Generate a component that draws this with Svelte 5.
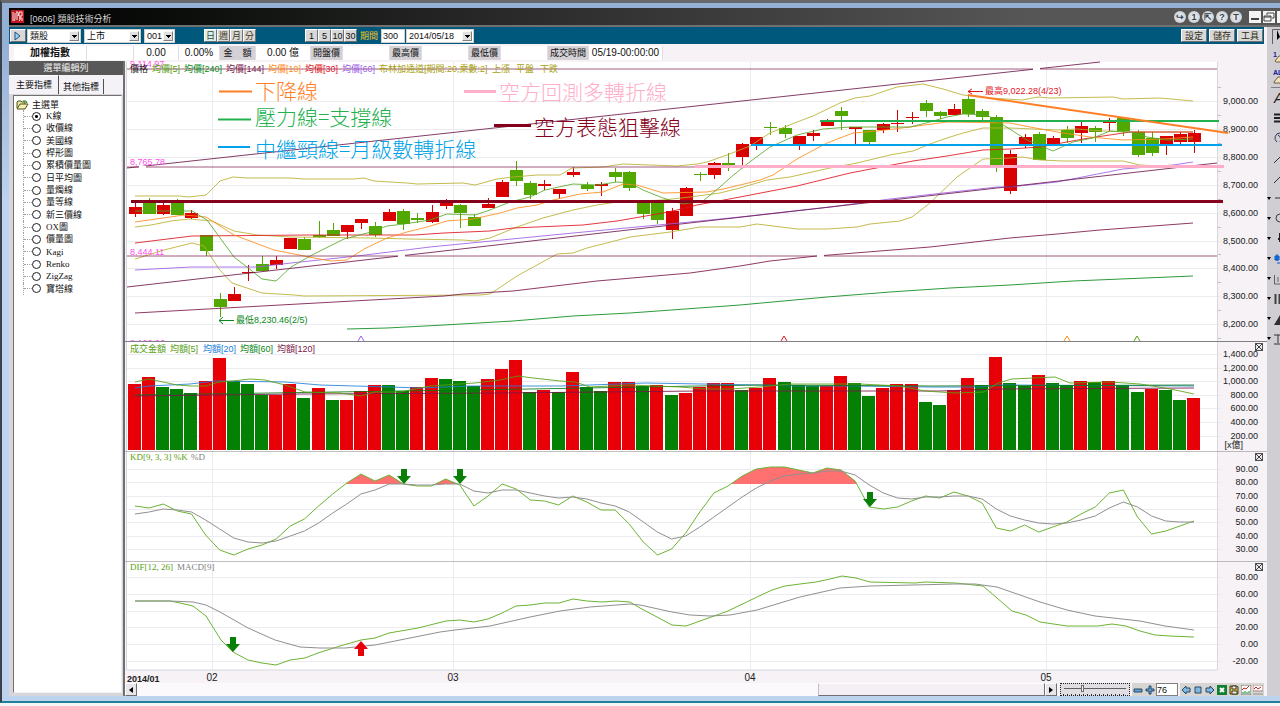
<script lang="ts">
  // all chart data below is in chart canvas units; the canvas starts at x=125
  const STEP = 14.12
  const X0 = 135
  const px = (i: number) => X0 + i * STEP

  // [color, body top, body bottom, high, low]
  const candles: [string, number, number, number, number][] = [
    ["r", 207, 214, 201, 217], ["g", 202, 214, 198, 214], ["r", 205, 214, 203, 215], ["g", 202, 215, 199, 215],
    ["r", 213, 218, 210, 219], ["g", 235, 251, 235, 256], ["g", 299, 307, 293, 317], ["r", 294, 301, 287, 301],
    ["r", 272, 273, 265, 281], ["g", 264, 271, 256, 271], ["r", 260, 265, 256, 269], ["r", 238, 249, 238, 249],
    ["g", 239, 250, 237, 250], ["g", 235, 237, 221, 238], ["g", 230, 236, 223, 236], ["r", 225, 232, 225, 239],
    ["r", 219, 223, 219, 229], ["g", 226, 235, 222, 237], ["r", 212, 221, 209, 221], ["g", 211, 224, 209, 230],
    ["g", 218, 220, 213, 223], ["r", 212, 222, 205, 223], ["r", 202, 206, 199, 209], ["g", 205, 213, 204, 228],
    ["g", 217, 226, 214, 226], ["r", 204, 208, 198, 208], ["r", 182, 197, 180, 197], ["g", 170, 181, 161, 186],
    ["g", 183, 195, 181, 199], ["r", 184, 186, 180, 190], ["r", 189, 194, 189, 199], ["r", 172, 175, 167, 177],
    ["g", 185, 189, 182, 191], ["r", 184, 186, 182, 196], ["g", 172, 177, 168, 182], ["g", 172, 188, 171, 191],
    ["g", 202, 214, 202, 219], ["g", 202, 220, 202, 224], ["r", 211, 230, 208, 239], ["r", 188, 216, 187, 216],
    ["g", 174, 175, 172, 181], ["r", 163, 175, 162, 179], ["g", 163, 166, 153, 171], ["r", 144, 157, 143, 166],
    ["r", 137, 144, 137, 150], ["g", 127, 128, 122, 135], ["g", 128, 134, 125, 138], ["r", 136, 144, 136, 150],
    ["r", 133, 136, 130, 141], ["r", 120, 126, 119, 126], ["g", 111, 116, 107, 130], ["r", 127, 129, 127, 144],
    ["g", 130, 142, 130, 144], ["r", 124, 130, 123, 133], ["r", 123, 124, 110, 132], ["r", 117, 118, 112, 124],
    ["g", 103, 111, 100, 117], ["g", 112, 116, 111, 119], ["r", 109, 115, 104, 115], ["g", 99, 114, 94, 117],
    ["g", 111, 117, 109, 122], ["g", 117, 166, 115, 172], ["r", 154, 191, 150, 194], ["r", 137, 144, 134, 148],
    ["g", 134, 160, 132, 160], ["r", 138, 144, 136, 146], ["g", 130, 138, 126, 143], ["r", 126, 133, 122, 143],
    ["g", 128, 132, 126, 142], ["r", 122, 123, 118, 131], ["g", 118, 131, 117, 136], ["g", 132, 155, 130, 157],
    ["g", 138, 153, 132, 156], ["r", 136, 144, 136, 155], ["r", 134, 142, 132, 146], ["r", 133, 142, 130, 153],
  ]

  const priceLines = [
    { color: "#b8b030", d: "135,196 179,196 189,197 206,195 220,181 233,177 247,178 291,178 304,179 354,179 364,178 374,181 407,183 417,184 463,183 475,185 497,179 513,177 537,175 560,175 572,168 603,167 623,164 650,165 677,166 697,164 707,162 727,155 750,146 770,133 797,122 813,116 840,103 855,98 870,96 897,87 923,84 943,89 963,95 990,98 1022,100 1038,97 1050,98 1113,97 1123,99 1160,98 1193,101" },
    { color: "#b8b030", d: "135,227 151,225 171,221 189,219 212,221 234,231 257,235 291,237 370,238 410,239 463,240 475,241 490,238 517,227 543,218 573,210 597,205 617,202 663,200 690,197 720,193 740,188 767,180 790,177 830,168 857,163 890,155 913,151 930,144 947,138 963,133 983,128 1010,128 1057,130 1077,129 1103,131 1127,132 1193,132" },
    { color: "#b8b030", d: "135,259 164,250 192,243 204,246 219,269 232,283 262,293 294,295 304,296 480,295 490,294 517,276 557,254 573,253 587,248 630,237 670,232 700,227 740,227 757,224 797,229 827,229 857,227 870,224 900,221 912,217 930,203 957,177 983,159 1010,158 1022,157 1040,160 1063,161 1123,161 1140,165 1158,166" },
    { color: "#9b5fe8", d: "135,270 191,267 257,267 291,263 357,256 430,247 573,233 690,222 740,217 830,207 890,199 997,187 1010,187 1057,182 1123,169 1173,165 1193,162" },
    { color: "#e0141e", d: "135,243 192,236 311,235 357,235 414,235 444,233 490,231 513,228 583,225 617,221 663,213 677,210 697,205 740,197 797,186 850,173 913,161 947,156 983,150 1010,149 1040,147 1083,139 1130,132 1193,132" },
    { color: "#ff8c1a", d: "135,222 184,215 206,217 234,235 274,250 314,258 331,261 347,260 364,249 387,238 407,232 427,227 447,221 473,219 500,213 517,208 537,205 553,200 580,194 603,192 623,184 637,185 663,193 707,192 723,189 740,185 760,180 773,175 797,159 827,143 853,133 877,131 910,127 947,122 1010,123 1030,127 1057,132 1090,137 1123,140 1163,139 1193,137" },
    { color: "#58a828", d: "135,211 178,211 192,211 207,220 234,257 247,267 262,279 276,281 291,267 312,255 344,239 371,232 387,226 404,224 417,222 430,220 447,214 475,215 490,210 510,202 530,197 545,190 573,184 597,185 617,182 630,183 643,190 663,198 683,204 703,201 720,187 730,178 747,164 770,147 797,135 823,129 850,127 910,127 930,122 947,117 963,114 987,115 1005,126 1027,140 1053,151 1073,142 1093,138 1110,131 1130,132 1147,137 1167,140 1193,139" },
    { color: "#7a1848", d: "135,313 444,296 463,294 513,291 597,281 690,273 740,266 770,261 817,256 930,247 1010,238 1057,234 1100,230 1193,223" },
    { color: "#088818", d: "347,329 387,328 444,325 513,321 573,316 630,313 740,305 827,297 890,292 950,288 1010,285 1073,281 1193,276" },
    { color: "#6e1a4c", d: "127,168 1100,62" },
    { color: "#6e1a4c", d: "127,287 1217,163" },
  ]

  const volumeTops = [
    384, 377, 387, 389, 393, 381, 358, 381, 384, 395, 395, 384, 398, 388, 400, 400, 391, 385, 385,
    391, 387, 378, 379, 381, 386, 379, 369, 360, 392, 390, 392, 372, 387, 391, 382, 382, 386, 385,
    395, 393, 387, 383, 383, 390, 388, 378, 382, 385, 386, 386, 376, 383, 396, 388, 384, 384, 402,
    405, 390, 378, 385, 357, 383, 386, 375, 383, 385, 381, 382, 381, 385, 392, 389, 390, 400, 398,
  ]
  const volumeColors = "rrgggrrgggrrgrgrrrggrrgggrrrgrgrggrrgrgrrrrgrrgggrrggrrrggrrgrggrggrgrggrggr"

  const volumeLines = [
    { color: "#2080d8", d: "135,388 149,386 190,384 215,381 285,382 320,385 390,387 420,388 470,386 560,386 590,385 645,383 760,385 800,386 860,386 930,387 980,387 1000,385 1194,386" },
    { color: "#087818", d: "135,395 270,393 400,391 530,389 640,387 760,385 930,386 1194,385" },
    { color: "#7a1848", d: "135,396 300,394 500,393 700,391 940,391 1000,389 1194,388" },
    { color: "#58a010", d: "135,382 149,379 163,382 177,385 191,386 206,386 219,382 233,381 250,379 265,380 285,385 305,392 340,393 361,396 375,392 400,392 430,386 475,383 500,380 518,376 533,378 560,381 575,382 590,387 630,385 680,387 705,389 730,389 760,387 790,384 860,384 900,386 925,391 955,393 984,392 998,383 1012,379 1055,377 1070,383 1110,382 1140,384 1165,388 1180,391 1194,394" },
  ]

  const kLine = [
    506, 508, 504, 511, 514, 535, 550, 555, 549, 545, 539, 526, 519, 506, 494, 483, 474, 481, 475,
    484, 486, 486, 479, 485, 506, 496, 484, 489, 500, 501, 505, 496, 502, 510, 510, 524, 542, 555,
    549, 533, 512, 493, 486, 476, 469, 467, 467, 470, 473, 468, 470, 481, 507, 509, 507, 501, 496,
    498, 492, 496, 503, 528, 531, 525, 532, 527, 522, 514, 507, 493, 490, 517, 534, 531, 526, 521,
  ]
  const dLine = [
    514, 512, 509, 510, 512, 520, 529, 538, 542, 543, 541, 536, 531, 523, 513, 504, 494, 490, 484,
    484, 485, 485, 484, 484, 491, 493, 490, 490, 493, 496, 498, 497, 499, 503, 506, 512, 522, 532,
    539, 536, 527, 517, 507, 497, 488, 481, 476, 474, 473, 471, 471, 475, 485, 493, 498, 499, 497,
    497, 496, 496, 499, 509, 516, 520, 523, 524, 523, 520, 516, 508, 502, 507, 516, 521, 522, 522,
  ]
  const toPoints = (ys: number[]) => ys.map((y, i) => `${px(i).toFixed(1)},${y}`).join(" ")

  const dif = "135,601 170,601 180,603 193,606 206,616 221,640 233,652 248,660 262,663 276,665 290,660 305,658 318,653 340,646 361,640 375,638 389,633 418,628 446,621 460,620 474,622 488,619 502,613 516,606 530,605 545,603 559,603 573,599 587,601 602,602 616,601 630,602 640,608 672,625 686,626 700,621 728,611 757,597 772,590 785,586 800,584 816,582 830,579 842,576 856,578 870,582 915,583 925,582 955,583 965,584 983,586 997,598 1012,611 1026,615 1040,622 1067,626 1098,626 1112,624 1126,626 1140,631 1155,635 1170,636 1194,637"
  const macd = "135,601 170,601 193,602 206,605 220,612 248,628 275,640 300,647 320,648 345,648 375,645 400,640 440,632 455,630 490,626 530,617 560,611 590,607 630,604 640,605 672,612 690,615 710,616 730,615 757,610 800,597 840,588 870,586 955,584 975,584 997,587 1040,602 1067,610 1095,616 1140,621 1165,626 1194,630"

  const months = [212, 453, 750, 1046]
  const priceTicks = ["9,000.00", "8,900.00", "8,800.00", "8,700.00", "8,600.00", "8,500.00", "8,400.00", "8,300.00", "8,200.00"]
  const volumeTicks = ["1,400.00", "1,200.00", "1,000.00", "800.00", "600.00", "400.00", "200.00"]
  const kdTicks = ["90.00", "80.00", "70.00", "60.00", "50.00", "40.00", "30.00"]
  const macdTicks = ["80.00", "60.00", "40.00", "20.00", "0.00", "-20.00"]

  const priceLegend = [
    { x: 130, text: "價格", color: "#111111" },
    { x: 152, text: "均價[5]", color: "#58a010" },
    { x: 184, text: "均價[240]", color: "#088818" },
    { x: 226, text: "均價[144]", color: "#7a1848" },
    { x: 268, text: "均價[10]", color: "#ff8c1a" },
    { x: 305, text: "均價[30]", color: "#e0141e" },
    { x: 342, text: "均價[60]", color: "#9b5fe8" },
    { x: 379, text: "布林加通道[期間:20,乘數:2]", color: "#a8a010" },
    { x: 492, text: "上漲", color: "#a8a010" },
    { x: 516, text: "平盤", color: "#a8a010" },
    { x: 540, text: "下跌", color: "#a8a010" },
  ]
  const volumeLegend = [
    { x: 130, text: "成交金額", color: "#58a010" },
    { x: 170, text: "均額[5]", color: "#58a010" },
    { x: 203, text: "均額[20]", color: "#2080d8" },
    { x: 240, text: "均額[60]", color: "#088818" },
    { x: 277, text: "均額[120]", color: "#7a1848" },
  ]

  const chartTypes = ["K線", "收價線", "美國線", "桿形圖", "累積價量圖", "日平均圖", "量燭線", "量等線", "新三價線", "OX圖", "價量圖", "Kagi", "Renko", "ZigZag", "寶塔線"]
  let chartType = $state("K線")
  let days = $state("300")
  let zoom = $state("76")

  const titleButtons = ["↪", "1", "⇱", "?", "T"]
</script>

{#snippet grid(top: number, bottom: number, first: number, gap: number, ticks: string[])}
  <rect x="127" y={top} width="1090" height={bottom - top} fill="#ffffff" />
  {#each ticks as tick, i}
    <line class="grid" x1="127" x2="1222" y1={Math.round(first + i * gap) + 0.5} y2={Math.round(first + i * gap) + 0.5} />
    <text class="tick" x="1258" y={Math.round(first + i * gap) + 3}>{tick}</text>
  {/each}
  {#each months as m}
    <line class="grid" x1={m + 0.5} x2={m + 0.5} y1={top} y2={bottom} />
  {/each}
  <line class="edge" x1="1217.5" x2="1217.5" y1={top} y2={bottom} />
  <line class="edge" x1="126.5" x2="126.5" y1={top} y2={bottom} />
{/snippet}

{#snippet downArrow(x: number, y: number)}
  <path fill="#088008" d="M{x - 3} {y}h6v7h4l-7 8l-7 -8h4z" />
{/snippet}

<div class="window">
  <header class="titlebar">
    <svg class="logo" width="13" height="13" viewBox="0 0 13 13">
      <rect width="13" height="13" fill="#c01820" />
      <path d="M2 2v9M4 3v6l-1 2M5 2h2M6 2v8M8 3l-1 3M8 2h3v4H8zM8 8h3M9 6v4l-1 1M11 8v3" stroke="#f8e8e8" fill="none" />
    </svg>
    <h1>[0606] 類股技術分析</h1>
    <div class="title-buttons">
      {#each titleButtons as b}
        <button class="round">{b}</button>
      {/each}
    </div>
    <button class="win" aria-label="最小化">
      <svg width="12" height="12" viewBox="0 0 12 12"><path d="M2 8h8" stroke="#444" stroke-width="2" /></svg>
    </button>
    <button class="win" aria-label="還原">
      <svg width="12" height="12" viewBox="0 0 12 12"><path d="M4 4V2h7v5H9M1 5h7v5H1zM1 6h7" stroke="#444" fill="none" /></svg>
    </button>
    <button class="win clipped" aria-label="關閉"></button>
  </header>

  <div class="upper">
    <div class="upper-main">
      <div class="toolbar">
        <button class="face play" aria-label="執行">
          <svg width="8" height="10" viewBox="0 0 8 10"><path d="M1 1l5 4l-5 4z" fill="#9cd0f0" stroke="#205080" /></svg>
        </button>
        <span class="select w54"><select aria-label="類別"><option>類股</option></select></span>
        <span class="select w57"><select aria-label="市場"><option>上市</option></select></span>
        <span class="select w31"><select aria-label="代碼"><option>001</option></select></span>
        <div class="group periods">
          <button class="face on">日</button>
          <button class="face">週</button>
          <button class="face">月</button>
          <button class="face">分</button>
        </div>
        <div class="group minutes">
          <button class="face">1</button>
          <button class="face">5</button>
          <button class="face">10</button>
          <button class="face">30</button>
        </div>
        <label class="range" for="days">期間</label>
        <input id="days" class="days" bind:value={days} />
        <span class="select w68"><select aria-label="日期"><option>2014/05/18</option></select></span>
        <div class="actions">
          <button class="face">設定</button>
          <button class="face">儲存</button>
          <button class="face">工具</button>
        </div>
      </div>

      <div class="quote">
        <strong class="w73">加權指數</strong>
        <span class="w47"></span>
        <span class="w45">0.00</span>
        <span class="w41">0.00%</span>
        <em class="w36">金&nbsp;&nbsp;&nbsp;&nbsp;額</em>
        <span class="w55">0.00 億</span>
        <em class="w32">開盤價</em>
        <span class="w47"></span>
        <em class="w32">最高價</em>
        <span class="w47"></span>
        <em class="w32">最低價</em>
        <span class="w47"></span>
        <em class="w41">成交時間</em>
        <span class="w74">05/19-00:00:00</span>
      </div>

      <div class="body">
        <aside>
          <h2>選單編輯列</h2>
          <nav class="tabs">
            <button class="tab active">主要指標</button>
            <button class="tab">其他指標</button>
          </nav>
          <div class="tree">
            <div class="root">
              <svg width="13" height="10" viewBox="0 0 13 10">
                <path d="M1 8V2l1-1h3l1 1h3v2" fill="#e8e8a0" stroke="#505020" />
                <path d="M1 9l3-5h8l-3 5z" fill="#f4f0b0" stroke="#505020" />
                <path d="M7 1h3l1 2" fill="none" stroke="#108010" />
              </svg>
              主選單
            </div>
            <ul>
              {#each chartTypes as type}
                <li>
                  <label>
                    <input type="radio" name="chart-type" value={type} bind:group={chartType} />
                    {type}
                  </label>
                </li>
              {/each}
            </ul>
          </div>
        </aside>

        <main>
          <section class="panel">
            <svg class="chart" viewBox="125 61 1142 280">
              {@render grid(62, 341, 101, 27.9, priceTicks)}
              {#each [87, 115, 143, 171, 199, 227, 254, 282, 310, 338] as y}
                <line class="minor" x1="1218" x2="1221" y1={y + 0.5} y2={y + 0.5} />
              {/each}

              {#each candles as [c, top, bottom, high, low], i}
                <line class="wick {c}" x1={Math.round(px(i)) + 0.5} x2={Math.round(px(i)) + 0.5} y1={high} y2={low} />
                <rect class="candle {c}" x={Math.round(px(i)) - 6} y={top} width="13" height={bottom - top} />
              {/each}

              {#each priceLines as line}
                <polyline points={line.d} stroke={line.color} class="line" />
              {/each}
              {#each [69, 167, 256] as y}
                <line x1="127" x2="1217" y1={y} y2={y} class="level" />
              {/each}
              <path d="M1033 69h7M398 256h7M817 256h7M139 167h7" stroke="#ffffff" stroke-width="2" />

              <!-- hand drawn support and resistance -->
              <g fill="none">
                <path d="M131 201.5H1223" stroke="#86001c" stroke-width="3" />
                <path d="M695 166.5H1224" stroke="#ffaec9" stroke-width="3" />
                <path d="M751 145H1222" stroke="#00a2e8" stroke-width="2" />
                <path d="M820 121H1219" stroke="#22b14c" stroke-width="2" />
                <path d="M968 95L1228 133" stroke="#ff7f27" stroke-width="2" />
                <path d="M219 91.5H252" stroke="#ff7f27" stroke-width="2" />
                <path d="M218 119.5H251" stroke="#22b14c" stroke-width="2" />
                <path d="M218 147H250" stroke="#00a2e8" stroke-width="2" />
                <path d="M464 91.5H496" stroke="#ffaec9" stroke-width="3" />
                <path d="M494 125.5H531" stroke="#86001c" stroke-width="3" />
              </g>
              <g class="note">
                <text x="255" y="99" fill="#ff7f27">下降線</text>
                <text x="255" y="125" fill="#22b14c">壓力線=支撐線</text>
                <text x="255" y="157" fill="#00a2e8">中繼頸線=月級數轉折線</text>
                <text x="499" y="100" fill="#ffaec9">空方回測多轉折線</text>
                <text x="534" y="135" fill="#86001c">空方表態狙擊線</text>
              </g>

              <g class="level-label">
                <text x="130" y="67">9,114.97</text>
                <text x="130" y="165">8,765.78</text>
                <text x="130" y="255">8,444.11</text>
                <text x="130" y="346">8,122.26</text>
              </g>

              {#each priceLegend as item}
                <text class="legend" x={item.x} y="72" fill={item.color}>{item.text}</text>
              {/each}

              <path d="M983 91.5H968M972 89l-4 2.5l4 2.5" class="pointer" stroke="#e0141e" />
              <text class="extreme" x="985" y="94" fill="#e0141e">最高9,022.28(4/23)</text>
              <path d="M234 320.5H219M223 317l-4 3.5l4 3.5" class="pointer" stroke="#088818" />
              <text class="extreme" x="236" y="323" fill="#088818">最低8,230.46(2/5)</text>

              <path d="M358 341l3-5l3 5" class="pointer" stroke="#9b5fe8" />
              <path d="M781 341l3-5l3 5" class="pointer" stroke="#e0141e" />
              <path d="M1064 341l3-5l3 5" class="pointer" stroke="#ff8c1a" />
              <path d="M1134 341l3-5l3 5" class="pointer" stroke="#58a010" />
            </svg>
          </section>

          <section class="panel">
            <svg class="chart" viewBox="125 341 1142 110">
              {@render grid(342, 451, 354, 13.6, volumeTicks)}
              <text class="tick" x="1243" y="448">[x億]</text>
              {#each volumeTops as top, i}
                <rect class="volume {volumeColors[i]}" x={Math.round(px(i)) - 7} y={top} width="13" height={450 - top} />
              {/each}
              {#each volumeLines as line}
                <polyline points={line.d} stroke={line.color} class="line" />
              {/each}
              {#each volumeLegend as item}
                <text class="legend" x={item.x} y="352" fill={item.color}>{item.text}</text>
              {/each}
              <line class="divider" x1="125" x2="1267" y1="341.5" y2="341.5" />
            </svg>
            <button class="close" aria-label="關閉成交金額"></button>
          </section>

          <section class="panel">
            <svg class="chart" viewBox="125 451 1142 110">
              {@render grid(451, 561, 469, 13.3, kdTicks)}
              <clipPath id="overbought"><rect x="127" y="455" width="1090" height="29" /></clipPath>
              <polygon clip-path="url(#overbought)" fill="#ff7070" points="{X0},560 {toPoints(kLine)} {px(75)},560" />
              <polyline points={toPoints(kLine)} stroke="#6cb434" class="line solid" />
              <polyline points={toPoints(dLine)} stroke="#909090" class="line solid" />
              {@render downArrow(404, 469)}
              {@render downArrow(460, 469)}
              {@render downArrow(870, 492)}
              <text class="legend latin" x="130" y="460" fill="#58a010">KD[9, 3, 3] %K</text>
              <text class="legend latin" x="191" y="460" fill="#808080">%D</text>
              <line class="divider" x1="125" x2="1267" y1="451" y2="451" />
            </svg>
            <button class="close" aria-label="關閉KD"></button>
          </section>

          <section class="panel">
            <svg class="chart" viewBox="125 561 1142 110">
              {@render grid(561, 670, 577, 16.8, macdTicks)}
              <polyline points={dif} stroke="#6cb434" class="line solid" />
              <polyline points={macd} stroke="#909090" class="line solid" />
              {@render downArrow(233, 637)}
              <path fill="#e80008" d="M358 656v-7h-4l7 -8l7 8h-4v7z" />
              <text class="legend latin" x="130" y="570" fill="#58a010">DIF[12, 26]</text>
              <text class="legend latin" x="177" y="570" fill="#808080">MACD[9]</text>
              <line class="divider" x1="125" x2="1267" y1="561" y2="561" />
              <line class="edge" x1="127" x2="1217" y1="670" y2="670" />
            </svg>
            <button class="close" aria-label="關閉MACD"></button>
          </section>

          <svg class="chart" viewBox="125 671 1142 12">
            <text class="month first" x="127" y="682">2014/01</text>
            {#each months as m, i}
              <text class="month" x={m} y="681" text-anchor="middle">0{i + 2}</text>
            {/each}
          </svg>

          <footer>
            <button class="scroll" aria-label="向左">
              <svg width="6" height="8" viewBox="0 0 6 8"><path d="M5 1v6l-4-3z" /></svg>
            </button>
            <div class="track"><div class="thumb"></div></div>
            <button class="scroll" aria-label="向右">
              <svg width="6" height="8" viewBox="0 0 6 8"><path d="M1 1v6l4-3z" /></svg>
            </button>
            <input class="slider" type="range" min="0" max="100" value="30" aria-label="縮放" />
            <button class="tool" aria-label="縮小">
              <svg width="10" height="10" viewBox="0 0 10 10"><path d="M1 4h8v3H1z" fill="#60a0d0" stroke="#284868" /></svg>
            </button>
            <button class="tool" aria-label="放大">
              <svg width="10" height="10" viewBox="0 0 10 10"><path d="M4 1h2v3h3v2H6v3H4V6H1V4h3z" fill="#60a0d0" stroke="#284868" /></svg>
            </button>
            <input class="count" bind:value={zoom} aria-label="筆數" />
            <button class="tool gap" aria-label="前移">
              <svg width="10" height="10" viewBox="0 0 10 10"><path d="M1 5l4-4v2h4v4H5v2z" fill="#80b8e0" stroke="#284868" /></svg>
            </button>
            <button class="tool" aria-label="停止">
              <svg width="10" height="10" viewBox="0 0 10 10"><path d="M2 2h6v6H2z" fill="#80b8e0" stroke="#284868" /></svg>
            </button>
            <button class="tool" aria-label="後移">
              <svg width="10" height="10" viewBox="0 0 10 10"><path d="M9 5l-4-4v2H1v4h4v2z" fill="#80b8e0" stroke="#284868" /></svg>
            </button>
            <button class="tool" aria-label="匯出">
              <svg width="10" height="10" viewBox="0 0 10 10"><path d="M0 0h10v10H0z" fill="#108030" /><path d="M3 3l4 4M7 3l-4 4" stroke="#fff" stroke-width="2" /></svg>
            </button>
            <button class="tool" aria-label="存檔">
              <svg width="10" height="10" viewBox="0 0 10 10"><path d="M1 1h7l1 1v7H1z" fill="#d8c050" stroke="#403820" /><path d="M3 1h4v3H3zM3 6h5v3H3z" fill="#f4f4f4" stroke="#403820" /></svg>
            </button>
            <button class="tool" aria-label="圖表">
              <svg width="10" height="10" viewBox="0 0 10 10"><path d="M0 0h10v10H0z" fill="#fff" stroke="#606060" /><path d="M1 5l2-2l2 1l3-3" stroke="#d02020" fill="none" /><path d="M2 9V7M4 9V6M6 9V7M8 9V6" stroke="#108030" /></svg>
            </button>
            <button class="tool" aria-label="走勢">
              <svg width="10" height="10" viewBox="0 0 10 10"><path d="M0 0h10v6H0z" fill="#fff" stroke="#a08080" /><path d="M1 4l2-2l2 2l3-2" stroke="#d02020" fill="none" /><path d="M0 9h10" stroke="#909090" /></svg>
            </button>
          </footer>
        </main>
      </div>
    </div>

    <div class="drawbar">
      <svg width="13" height="320" viewBox="1267 27 13 320">
        <path d="M1272.5 44V29.5H1280" stroke="#606060" fill="none" />
        <path d="M1277 30v10l3-3z" />
        <path d="M1275 61l4-5h3v6h-6z" fill="#f0e0b0" stroke="#706040" />
        <text class="mark" x="1273" y="57">1</text>
        <path d="M1274 82l4-5h3v6h-7z" fill="#f0e0c0" stroke="#706040" />
        <text class="mark" x="1273" y="75">ALL</text>
        <path d="M1271 87.5H1280" stroke="#808080" />
        <text class="letter" x="1274" y="103">A</text>
        <path d="M1274 114.5h6M1274 118h6M1274 121.5h6" stroke="#202020" stroke-width="2" />
        <path d="M1280 133a5 5 0 0 0-3 9M1278 135a5 5 0 0 1 2 7" stroke="#303858" fill="none" />
        <path d="M1274 163l6-6M1274 183l6-6M1275 198h5" stroke="#303030" />
        <circle cx="1280" cy="218" r="4" fill="none" stroke="#404040" />
        <path d="M1278 239h2M1280 233v9" stroke="#202020" stroke-width="2" />
        <path d="M1277 254v7M1275 256h4v4h-4zM1277 263h3" stroke="#0858c8" fill="#2080f0" />
        <path d="M1274.5 275v9h6M1278 277v5" stroke="#606060" fill="none" />
        <path d="M1275.5 294v10M1279.5 294v10" stroke="#404040" stroke-width="2" />
        <path d="M1274 325l6-10v10z" fill="#303030" />
        <path d="M1274 335h6M1278 335v8M1274 344h6" stroke="#303030" />
        {#each [198, 218, 238, 258, 278, 298, 318, 338] as y}
          <path d="M1267 {y - 1}h4l-2 3z" />
        {/each}
      </svg>
    </div>
  </div>
</div>

<style>
  :global(body) {
    background: #f4f5f6;
    overflow: hidden;
  }

  .window {
    border-top: 3px solid #66686c;
    border-left: 2px solid #3c4048;
    border-bottom: 2px solid #208098;
    background: linear-gradient(#94b0d4 0, #94b0d4 40px, #bcd4f0 200px);
    padding: 5px 0 5px 7px;
    font-family: "Liberation Sans", "Noto Sans CJK TC", sans-serif;
    font-size: 9px;
    line-height: 12px;
    color: #101010;
  }

  button,
  input,
  select {
    font: inherit;
    color: inherit;
    margin: 0;
    padding: 0;
    border-radius: 0;
    box-sizing: border-box;
  }

  button {
    display: flex;
    align-items: center;
    justify-content: center;
    white-space: nowrap;
  }

  /* title bar */
  .titlebar {
    display: flex;
    align-items: center;
    height: 19px;
    box-sizing: border-box;
    border-bottom: 2px solid #707070;
    background: linear-gradient(90deg, #000 0, #0a0c0a 12%, #565656 80%);
  }

  .logo {
    margin-left: 2px;
  }

  h1 {
    margin: 4px auto 0 6px;
    font-size: 9px;
    font-weight: 400;
    color: #d8d8d8;
  }

  .title-buttons {
    display: flex;
    gap: 2px;
    margin-right: 7px;
  }

  .round {
    width: 12px;
    height: 12px;
    border: 0;
    border-radius: 50%;
    background: radial-gradient(#f4f6f8, #b8c0c8);
    color: #38424c;
    font-size: 9px;
    font-weight: 700;
    line-height: 12px;
  }

  .win {
    width: 12px;
    height: 12px;
    margin-right: 2px;
    border: 0;
    background: #f4f4f4;
  }

  .win.clipped {
    width: 3px;
    margin-right: 0;
  }

  .upper {
    display: flex;
    background: #d0ced2;
  }

  .upper-main {
    flex: 1;
    min-width: 0;
    background: #f6f2f6;
  }

  .drawbar {
    width: 13px;
    flex: none;
    overflow: hidden;
  }

  .drawbar svg {
    display: block;
  }

  .mark {
    font: 700 7px "Liberation Sans", sans-serif;
    fill: #1818a0;
  }

  .letter {
    font: italic 14px "Liberation Sans", sans-serif;
    fill: #202020;
  }

  /* toolbar */
  .toolbar {
    display: flex;
    align-items: center;
    height: 17px;
    padding-left: 1px;
    background: #00587c;
    margin-right: 3px;
  }

  .face {
    height: 13px;
    border: 1px solid;
    border-color: #fff #707070 #707070 #fff;
    background: #d8d8d8;
    line-height: 10px;
  }

  .play {
    width: 16px;
    margin-right: 1px;
  }

  .select {
    position: relative;
    margin-right: 3px;
    height: 14px;
  }

  .select select {
    display: block;
    width: 100%;
    height: 14px;
    padding-left: 2px;
    border: 1px solid #d0d0d0;
    background: #fff;
    appearance: none;
    outline: 0;
  }

  .select::after {
    content: "";
    position: absolute;
    top: 2px;
    right: 2px;
    width: 10px;
    height: 10px;
    box-sizing: border-box;
    border: 1px solid;
    border-color: #f8f8f8 #808080 #808080 #f8f8f8;
    background: linear-gradient(#000, #000) 2px 3px / 5px 1px no-repeat, linear-gradient(#000, #000) 3px 4px / 3px 1px no-repeat, linear-gradient(#000, #000) 4px 5px / 1px 1px no-repeat, #e0e0e0;
    pointer-events: none;
  }

  .group {
    display: flex;
  }

  .group .face {
    width: 13px;
  }

  .periods {
    margin: 0 49px 0 26px;
    color: #484020;
  }

  .periods .on {
    background: #d8f0f4;
  }

  .range {
    margin: 0 3px;
    color: #f0c020;
  }

  .days {
    width: 24px;
    height: 14px;
    margin-right: 1px;
    padding-left: 1px;
    border: 1px solid #d0d0d0;
    background: #fff;
  }

  .actions {
    display: flex;
    gap: 2px;
    margin: 0 1px 0 auto;
    color: #302810;
  }

  .actions .face {
    width: 26px;
  }

  /* quote row */
  .quote {
    display: flex;
    height: 17px;
    box-sizing: border-box;
    padding: 2px 0 1px 5px;
    font-size: 10px;
    line-height: 14px;
    text-align: center;
    white-space: nowrap;
  }

  .quote > * {
    box-sizing: border-box;
    background: #fff;
    border-right: 1px solid #e0dce2;
  }

  .quote em {
    background: #d4d0d6;
    font-size: 9px;
    font-style: normal;
  }

  .w31 { width: 31px; }
  .w32 { width: 32px; }
  .w36 { width: 36px; }
  .w41 { width: 41px; }
  .w45 { width: 45px; }
  .w47 { width: 47px; }
  .w54 { width: 54px; }
  .w55 { width: 55px; }
  .w57 { width: 57px; }
  .w68 { width: 68px; }
  .w73 { width: 73px; }
  .w74 { width: 74px; }

  .body {
    display: flex;
  }

  /* sidebar */
  aside {
    width: 116px;
    flex: none;
    display: flex;
    flex-direction: column;
    box-sizing: border-box;
    border-right: 2px solid #707074;
    background: #d8d6da;
  }

  h2 {
    margin: 0;
    background: #585858;
    color: #f0f0f0;
    font-size: 9px;
    font-weight: 400;
    line-height: 14px;
    text-align: center;
  }

  .tabs {
    display: flex;
    align-items: flex-end;
    height: 19px;
    padding-left: 2px;
    background: #f4f2f6;
  }

  .tab {
    height: 15px;
    padding: 0 4px;
    border: 0;
    border-right: 1px solid #505050;
    background: #f4f2f6;
  }

  .tab.active {
    height: 19px;
    padding: 0 6px 0 5px;
    border-top: 1px solid #fff;
  }

  .tree {
    flex: 1;
    margin: 1px 1px 3px 4px;
    padding: 3px 0 0 2px;
    border: 1px solid;
    border-color: #707070 #f0f0f0 #f0f0f0 #707070;
    background: #fff;
  }

  .root {
    display: flex;
    align-items: center;
    gap: 3px;
    height: 11px;
  }

  ul {
    display: grid;
    grid-auto-rows: 1fr;
    height: 185px;
    margin: 0 0 0 7px;
    padding: 0;
    list-style: none;
    font-family: "Liberation Serif", "Noto Sans CJK TC", sans-serif;
  }

  li {
    display: flex;
    align-items: center;
    border-left: 1px dotted #a0a0a0;
  }

  li::before {
    content: "";
    width: 8px;
    border-top: 1px dotted #a0a0a0;
  }

  li label {
    display: flex;
    align-items: center;
    gap: 5px;
  }

  li input {
    width: 9px;
    height: 9px;
    border: 1px solid #202020;
    border-radius: 50%;
    background: #fff;
    appearance: none;
  }

  li input:checked {
    background: radial-gradient(#000 0, #000 1px, #fff 2px);
  }

  /* charts */
  main {
    flex: 1;
    min-width: 0;
  }

  .panel {
    position: relative;
  }

  .chart {
    display: block;
    width: 100%;
    height: auto;
  }

  .grid {
    stroke: #ececf0;
  }

  .edge {
    stroke: #d8d8dc;
  }

  .minor {
    stroke: #c0c0c4;
  }

  .divider {
    stroke: #808084;
  }

  .tick {
    font: 9px "Liberation Sans", "Noto Sans CJK TC", sans-serif;
    text-anchor: end;
    fill: #202020;
  }

  .line {
    fill: none;
    stroke-width: 1;
    opacity: 0.85;
  }

  .line.solid {
    opacity: 1;
  }

  .level {
    stroke: #7a1848;
    opacity: 0.7;
  }

  .wick.r { stroke: #d80000; }
  .wick.g { stroke: #50a800; }
  .candle.r { fill: #d80000; }
  .candle.g { fill: #50a800; }
  .volume.r { fill: #e80008; }
  .volume.g { fill: #048004; }

  .note {
    font: 300 21px "Noto Sans CJK TC", sans-serif;
  }

  .level-label {
    font: 9px "Liberation Sans", sans-serif;
    fill: #ff50f0;
  }

  .legend,
  .extreme {
    font: 9px "Liberation Sans", "Noto Sans CJK TC", sans-serif;
  }

  .legend.latin {
    font: 9px "Liberation Serif", serif;
  }

  .pointer {
    fill: none;
  }

  .month {
    font: 10px "Liberation Sans", sans-serif;
    fill: #202020;
  }

  .month.first {
    font-size: 9px;
    font-weight: 700;
  }

  .close {
    position: absolute;
    top: 2px;
    right: 4px;
    width: 8px;
    height: 8px;
    border: 1px solid #505050;
    background: linear-gradient(45deg, transparent 42%, #404040 42%, #404040 58%, transparent 58%), linear-gradient(-45deg, #e8e8e8 42%, #404040 42%, #404040 58%, #e8e8e8 58%);
  }

  /* bottom strip */
  footer {
    display: flex;
    align-items: center;
    height: 13px;
    padding-right: 3px;
  }

  .scroll {
    width: 12px;
    height: 13px;
    border: 1px solid;
    border-color: #fff #707070 #707070 #fff;
    background: #e8e6ea;
  }

  .track {
    flex: 1;
    display: flex;
    justify-content: flex-end;
    background: #fbf9fc;
  }

  .thumb {
    width: 25%;
    height: 13px;
    box-sizing: border-box;
    border: 1px solid;
    border-color: #fff #707070 #707070 #c0c0c0;
    background: #f3eff4;
  }

  .slider {
    width: 70px;
    height: 13px;
    margin: 0 2px 0 3px;
    border: 1px dotted #202020;
    appearance: none;
    background: linear-gradient(#606060, #606060) 3px 4px / 62px 1px no-repeat, repeating-linear-gradient(90deg, #303030 0 1px, transparent 1px 4px) 2px 10px / 64px 1px no-repeat, #e0dee2;
  }

  .slider::-webkit-slider-thumb {
    appearance: none;
    width: 3px;
    height: 7px;
    margin-top: -3px;
    border: 1px solid #707070;
    background: #f0f0f0;
  }

  .tool {
    width: 12px;
    height: 13px;
    border: 0;
    background: #d8d6d2;
  }

  .tool svg {
    flex: none;
  }

  .tool.gap {
    margin-left: 2px;
  }

  .count {
    width: 22px;
    height: 13px;
    border: 1px solid #808080;
    background: #fff;
  }
</style>
